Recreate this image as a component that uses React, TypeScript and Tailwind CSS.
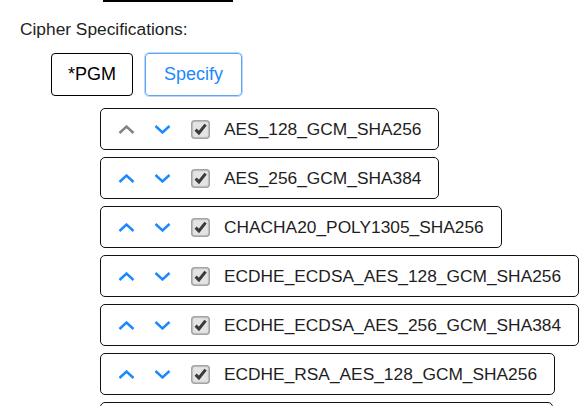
import React from "react";

const items = [
  "AES_128_GCM_SHA256",
  "AES_256_GCM_SHA384",
  "CHACHA20_POLY1305_SHA256",
  "ECDHE_ECDSA_AES_128_GCM_SHA256",
  "ECDHE_ECDSA_AES_256_GCM_SHA384",
  "ECDHE_RSA_AES_128_GCM_SHA256",
];

function Chevron({ up, color }: { up: boolean; color: string }) {
  return (
    <svg width="17" height="9" viewBox="0 0 17 9" className="block">
      <polyline
        points={up ? "1.5,8 8.5,1.5 15.5,8" : "1.5,1 8.5,7.5 15.5,1"}
        fill="none"
        stroke={color}
        strokeWidth="2.4"
      />
    </svg>
  );
}

function Check() {
  return (
    <svg width="19" height="19" viewBox="0 0 19 19" className="block">
      <rect x="0.75" y="0.75" width="17.5" height="17.5" rx="3" fill="#d8d8d8" stroke="#a3a3a3" strokeWidth="1.5" />
      <rect x="2.5" y="2.5" width="14" height="14" rx="1.5" fill="#e4e4e4" />
      <path d="M4.6 9.6 L7.9 12.9 L14.6 4.6" fill="none" stroke="#3a3a3a" strokeWidth="3" />
    </svg>
  );
}

export default function App() {
  return (
    <div
      className="w-[581px] h-[406px] overflow-hidden bg-white text-[#222]"
      style={{ fontFamily: '"Liberation Sans", Arial, sans-serif' }}
    >
      <div className="ml-[103px] w-[130px] h-[2px] bg-black" />
      <div className="ml-[20px] mt-[17px] text-[17.33px] leading-[20px]">Cipher Specifications:</div>
      <div className="ml-[51px] mt-[14px] flex gap-[12px]">
        <div className="w-[82px] h-[43px] border border-black rounded-[4px] flex items-center justify-center text-[18px] text-black">
          *PGM
        </div>
        <div className="w-[97px] h-[43px] border border-[#5ea4f2] rounded-[4px] flex items-center justify-center text-[18px] text-[#1a88ff] outline outline-1 outline-offset-0 outline-[#b9d7fa]">
          Specify
        </div>
      </div>
      <div className="ml-[100px] mt-[12px] flex flex-col gap-[7px] items-start">
        {items.map((t, i) => (
          <div
            key={t}
            className="h-[42px] shrink-0 border border-[#111] rounded-[5px] flex items-center pl-[17px] pr-[17px] whitespace-nowrap"
          >
            <Chevron up color={i === 0 ? "#7b8585" : "#1a88ff"} />
            <div className="w-[19px]" />
            <Chevron up={false} color="#1a88ff" />
            <div className="w-[20px]" />
            <Check />
            <div className="w-[14px]" />
            <span className="text-[17.33px] leading-[20px] text-[#1e1e1e]">{t}</span>
          </div>
        ))}
        <div className="h-[42px] w-[453px] shrink-0 border border-[#111] rounded-[5px]" />
      </div>
    </div>
  );
}
